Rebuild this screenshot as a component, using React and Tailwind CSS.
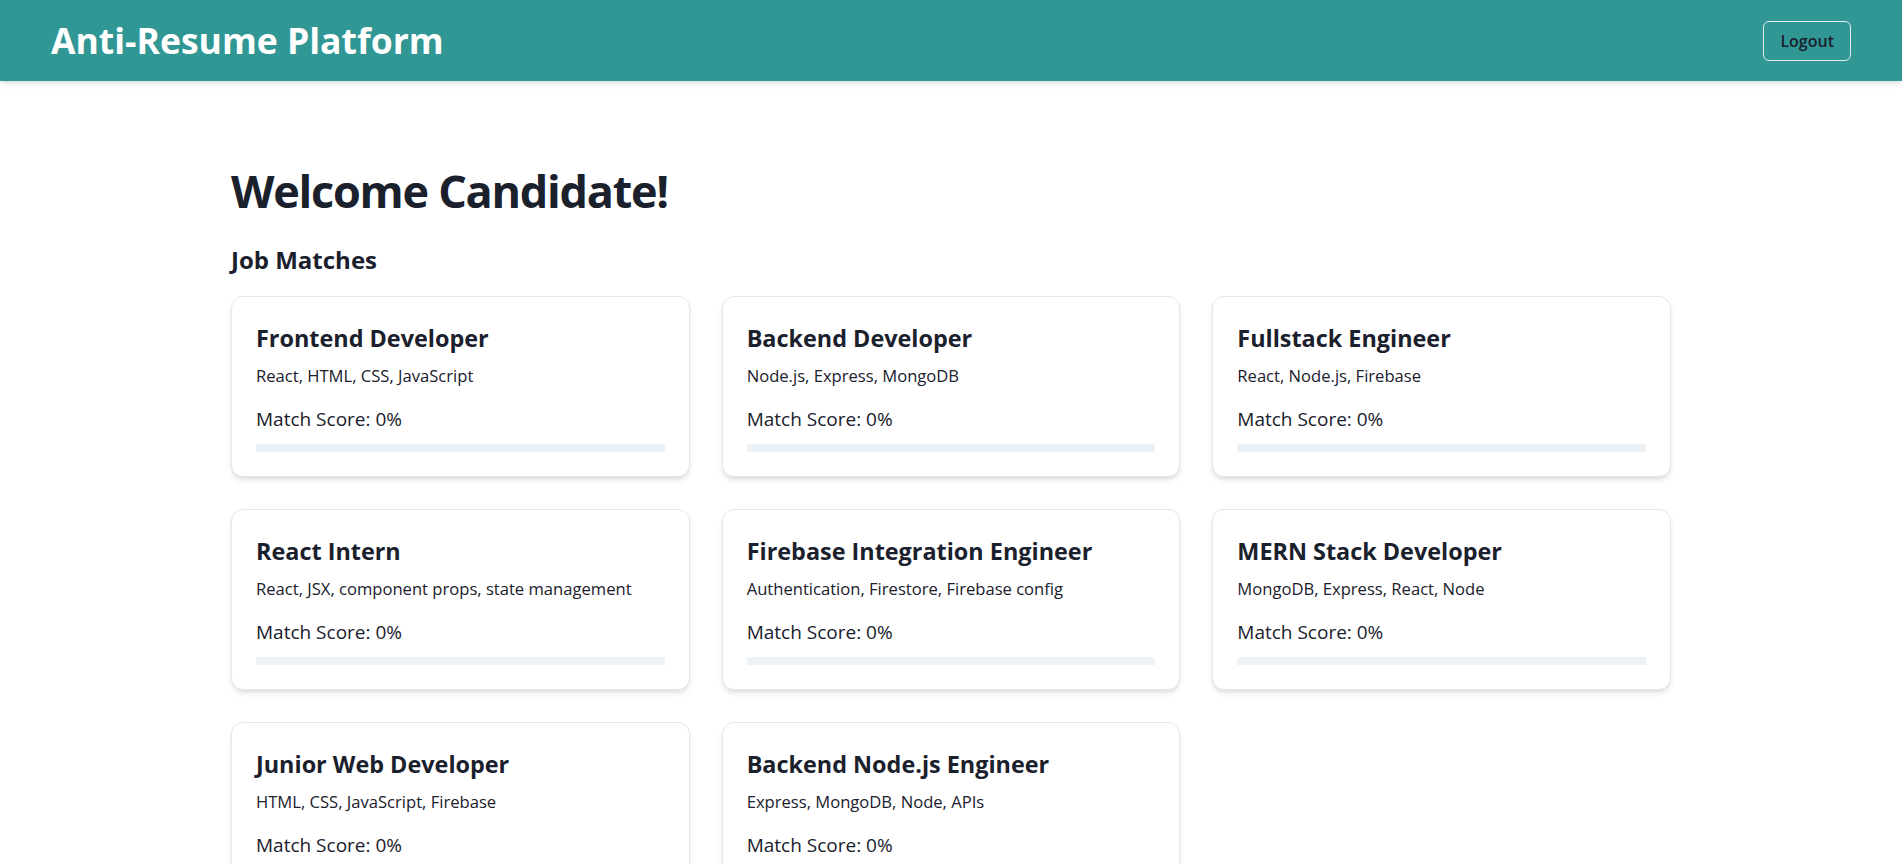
import React from "react";

const jobs = [
  { title: "Frontend Developer", skills: "React, HTML, CSS, JavaScript" },
  { title: "Backend Developer", skills: "Node.js, Express, MongoDB" },
  { title: "Fullstack Engineer", skills: "React, Node.js, Firebase" },
  { title: "React Intern", skills: "React, JSX, component props, state management" },
  { title: "Firebase Integration Engineer", skills: "Authentication, Firestore, Firebase config" },
  { title: "MERN Stack Developer", skills: "MongoDB, Express, React, Node" },
  { title: "Junior Web Developer", skills: "HTML, CSS, JavaScript, Firebase" },
  { title: "Backend Node.js Engineer", skills: "Express, MongoDB, Node, APIs" },
];

function JobCard({ title, skills }) {
  return (
    <div className="rounded-xl border border-[#E2E8F0] bg-white p-6 shadow-md">
      <h3 className="mt-[3px] text-[23.4px] font-bold leading-[28px] text-[#1A202C]">{title}</h3>
      <p className="mt-[12px] text-[16.6px] leading-[24px] text-[#1A202C]">{skills}</p>
      <p className="mt-[17px] text-[19px] leading-[28px] text-[#1A202C]">Match Score: 0%</p>
      <div className="mt-[11px] h-2 w-full bg-[#EDF2F7]">
        <div className="h-full bg-[#319795]" style={{ width: "0%" }} />
      </div>
    </div>
  );
}

export default function App() {
  return (
    <div className="h-screen overflow-hidden bg-white font-['Open_Sans',sans-serif] text-[#1A202C]">
      <header className="relative z-10 flex h-[81px] items-center justify-between bg-[#319795] px-[51px] shadow-md">
        <h1 className="text-[35.5px] font-bold leading-[43px] text-white">Anti-Resume Platform</h1>
        <button className="h-10 rounded-md border border-[#E2E8F0] px-4 text-[16px] font-semibold text-[#1A202C]">
          Logout
        </button>
      </header>
      <main className="mx-auto w-[1440px] pt-[83px]">
        <h2 className="text-[45px] font-bold leading-[54px] tracking-[-0.028em]">Welcome Candidate!</h2>
        <h3 className="mt-[28px] text-[24px] font-bold leading-[28.8px]">Job Matches</h3>
        <div className="mt-[21px] grid grid-cols-3 gap-8">
          {jobs.map((j) => (
            <JobCard key={j.title} {...j} />
          ))}
        </div>
      </main>
    </div>
  );
}
